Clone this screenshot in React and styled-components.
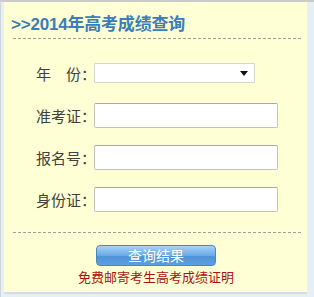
import React from 'react';
import styled, { createGlobalStyle } from 'styled-components';

const GlobalStyle = createGlobalStyle`
  html, body {
    margin: 0;
    padding: 0;
    background: #e4eff6;
  }
  * {
    box-sizing: border-box;
  }
`;

const Frame = styled.div`
  width: 314px;
  height: 297px;
  background: #e4eff6;
  border-top: 2px solid #c9cbc8;
  padding: 0 7px 5px 3px;
  border-left: 1px solid #cfd6da;
`;

const Panel = styled.div`
  height: 290px;
  background: #ffffd6;
  border-bottom: 1px solid #ffffff;
  box-shadow: 0 2px 0 #d8dde0;
  display: flex;
  flex-direction: column;
  font-family: "Liberation Sans", "Noto Sans CJK SC", sans-serif;
`;

const Title = styled.h2`
  margin: 0;
  height: 36px;
  padding: 13px 0 0 7px;
  font-size: 17px;
  line-height: 20px;
  font-weight: bold;
  color: #3b7db5;
  letter-spacing: -0.2px;
`;

const Dashed = styled.div`
  height: 1px;
  margin: ${({ $top }) => $top || 0}px 4px 0 9px;
  background-image: linear-gradient(to right, #9aa39f 60%, transparent 60%);
  background-size: 5px 1px;
  background-repeat: repeat-x;
`;

const Form = styled.div`
  margin-top: 13px;
  padding-left: 32px;
  display: grid;
  grid-auto-rows: 42px;
`;

const Row = styled.div`
  display: flex;
  align-items: center;
`;

const Label = styled.span`
  width: 58px;
  font-size: 15px;
  color: #404040;
  font-family: "Noto Sans CJK SC", sans-serif;
  white-space: pre;
`;

const TextBox = styled.div`
  width: 184px;
  height: 25px;
  background: #fff;
  border: 1px solid #c4c4bc;
  border-top-color: #a9a9a2;
  border-radius: 2px;
`;

const SelectBox = styled.div`
  width: 161px;
  height: 20px;
  background: #fff;
  border: 1px solid #d6d6cc;
  border-radius: 1px;
  display: flex;
  align-items: center;
  justify-content: flex-end;
  padding-right: 6px;
`;

const Arrow = styled.span`
  width: 0;
  height: 0;
  border-left: 4px solid transparent;
  border-right: 4px solid transparent;
  border-top: 5px solid #111;
`;

const Bottom = styled.div`
  display: flex;
  flex-direction: column;
  align-items: center;
  padding-right: 5px;
`;

const Button = styled.div`
  margin-top: 12px;
  width: 120px;
  height: 21px;
  border-radius: 4px;
  border: 1px solid #4a86c4;
  background: linear-gradient(#a9d2f4, #6aaae6 50%, #4f93d9 55%, #5d9fe0);
  color: #fff;
  font-size: 14px;
  line-height: 19px;
  text-align: center;
  font-family: "Noto Sans CJK SC", sans-serif;
  margin-left: 6px;
`;

const Notice = styled.div`
  margin-top: 3px;
  font-size: 13px;
  line-height: 16px;
  color: #a8140e;
  font-family: "Noto Sans CJK SC", sans-serif;
  margin-left: 6px;
`;

const fields = ['准考证：', '报名号：', '身份证：'];

export default function App() {
  return (
    <>
      <GlobalStyle />
      <Frame>
        <Panel>
          <Title>&gt;&gt;2014年高考成绩查询</Title>
          <Dashed />
          <Form>
            <Row>
              <Label>年　份：</Label>
              <SelectBox>
                <Arrow />
              </SelectBox>
            </Row>
            {fields.map((f) => (
              <Row key={f}>
                <Label>{f}</Label>
                <TextBox />
              </Row>
            ))}
          </Form>
          <Dashed $top={12} />
          <Bottom>
            <Button>查询结果</Button>
            <Notice>免费邮寄考生高考成绩证明</Notice>
          </Bottom>
        </Panel>
      </Frame>
    </>
  );
}
